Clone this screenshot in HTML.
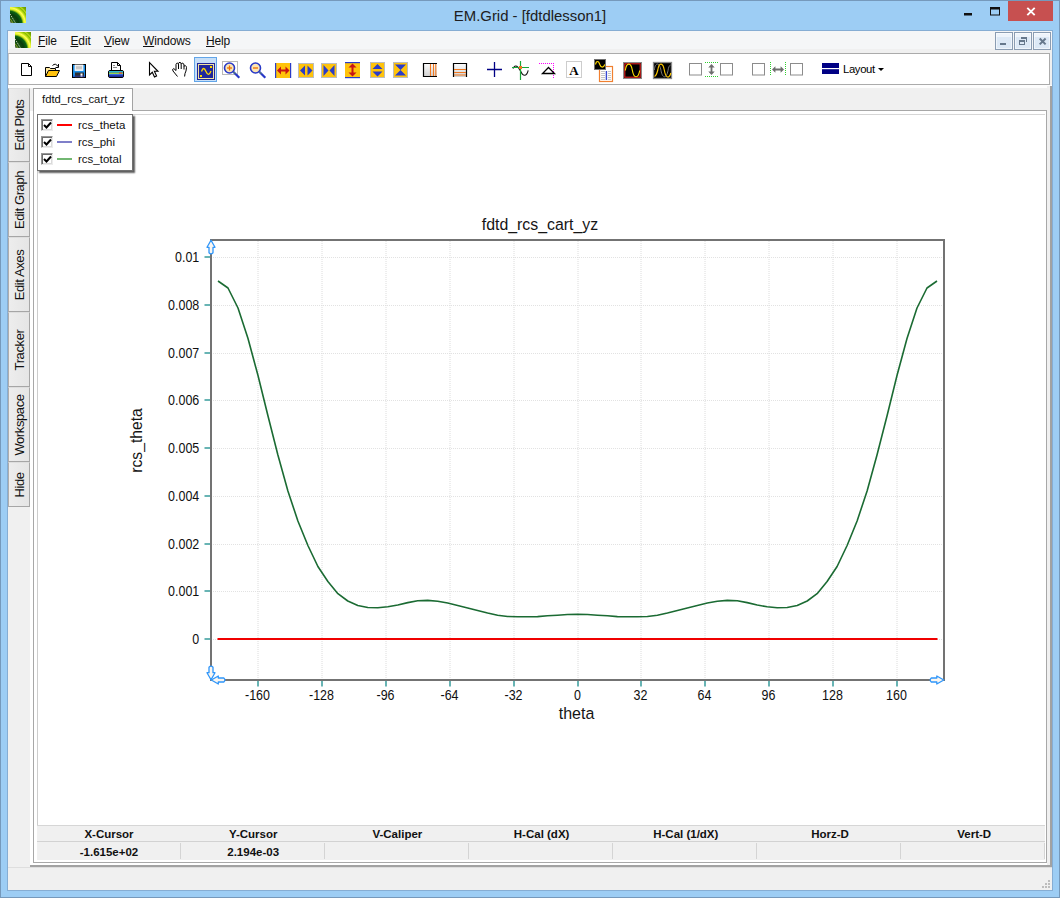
<!DOCTYPE html>
<html><head><meta charset="utf-8">
<style>
*{box-sizing:border-box;margin:0;padding:0}
html,body{width:1060px;height:898px;overflow:hidden}
body{position:relative;background:#9dcdf4;font-family:"Liberation Sans",sans-serif;font-size:12px;color:#000}
.abs{position:absolute}
#frame{left:0;top:0;width:1060px;height:898px;border:1px solid #7699bb}
#title{left:0;top:6px;width:1060px;text-align:center;font-size:14.9px;color:#202020;line-height:20px}
#client{left:7px;top:30px;width:1046px;height:861px;background:#f0f0f0;border:1px solid #86add3}
#menubar{left:8px;top:31px;width:1044px;height:18px;background:#f5f6f7}
#menubar span{position:absolute;top:3px;font-size:12px;letter-spacing:-0.15px;line-height:15px;color:#111}
#toolbar{left:8px;top:53px;width:1042px;height:32px;background:#fff;border:1px solid #ababab;border-left-color:#c8c8c8}
.stab{left:8px;width:22px;background:linear-gradient(to right,#ededed,#e5e5e5);border-top:1px solid #dedede;border-left:1px solid #adadad;border-right:1px solid #a6a6a6;border-bottom:1px solid #a6a6a6}
.stab span{position:absolute;left:10px;top:50%;white-space:nowrap;font-size:13px;letter-spacing:-0.4px;color:#111;transform:translate(-50%,-50%) rotate(-90deg)}
#dtab{left:33px;top:88px;width:100px;height:23px;background:#fff;border:1px solid #a3a3a3;border-bottom:none;font-size:11.3px;line-height:21px;padding-left:8px;color:#111}
#legend{left:37px;top:114px;width:96px;height:57px;background:#fff;border:1px solid #707070;box-shadow:2px 2px 1.5px rgba(0,0,0,.62)}
.lg{position:absolute;left:40px;font-size:11.5px;line-height:13px;color:#111}
.cb{position:absolute;left:3px;width:12px;height:12px;border:1px solid #969696;border-right-color:#ececec;border-bottom-color:#ececec;background:#fff;box-shadow:inset 1px 1px 0 #6c6c6c,inset -1px -1px 0 #dadada}
.cb svg{position:absolute;left:1px;top:0.5px}
.sw{position:absolute;left:19px;width:15px;height:2px}
.sh,.sv{position:absolute;width:143px;text-align:center;font-size:11.5px;font-weight:bold;color:#111;line-height:14px;letter-spacing:0px}
.sh{top:826.5px}.sv{top:844.5px}
.mdib{top:32px;width:18px;height:18px;background:linear-gradient(#eef4fb 0,#eef4fb 22%,#dde9f6 26%,#dce8f5 100%);border:1px solid #8a9cb2;box-shadow:inset 0 0 0 1px rgba(255,255,255,.55)}
.ico{position:absolute;overflow:visible}
</style></head><body>
<div id="frame" class="abs"></div>
<div id="title" class="abs">EM.Grid - [fdtdlesson1]</div>
<div class="abs" style="left:1008px;top:1px;width:45px;height:20px;background:#c75050"></div>
<svg class="abs" style="left:0;top:0" width="1060" height="30">
<path d="M1027.3,7.8 l7.4,7.4 M1034.7,7.8 l-7.4,7.4" stroke="#fff" stroke-width="1.9" fill="none"/>
<rect x="990.5" y="8" width="9" height="7" fill="none" stroke="#111" stroke-width="1"/><rect x="990" y="7" width="10" height="2.5" fill="#111"/>
<rect x="964" y="13" width="8" height="2.5" fill="#111"/>
</svg>
<div id="client" class="abs"></div>
<div id="menubar" class="abs"><span style="left:30px"><u>F</u>ile</span><span style="left:62.5px"><u>E</u>dit</span><span style="left:96px"><u>V</u>iew</span><span style="left:135px"><u>W</u>indows</span><span style="left:198px"><u>H</u>elp</span></div>
<div class="abs mdib" style="left:995px"></div><div class="abs mdib" style="left:1014px"></div><div class="abs mdib" style="left:1033px"></div>
<svg class="abs" style="left:0;top:0" width="1060" height="52" shape-rendering="crispEdges">
<rect x="1000" y="43" width="6" height="2" fill="#66788c"/>
<rect x="1021" y="37" width="6" height="2" fill="#66788c"/><rect x="1026" y="37" width="1" height="5" fill="#66788c"/>
<rect x="1019" y="40" width="6" height="2" fill="#66788c"/><rect x="1019" y="40" width="1" height="5" fill="#66788c"/><rect x="1024" y="40" width="1" height="5" fill="#66788c"/><rect x="1019" y="44" width="6" height="1" fill="#66788c"/>
<path d="M1039.7,38.500 l5.900,5.900 M1045.600,38.500 l-5.900,5.900" stroke="#66788c" stroke-width="2" fill="none" shape-rendering="auto"/>
</svg>
<div id="toolbar" class="abs"></div>
<svg class="abs" style="left:0;top:0" width="1060" height="90">
<path d="M21.5,63.5 H28.5 L31.5,66.5 V75.5 H21.5 Z" fill="#fff" stroke="#000" stroke-width="1"/><path d="M28.5,63.5 V66.5 H31.5" fill="none" stroke="#000" stroke-width="1"/>
<path d="M45.5,76.5 V67.5 H49.5 L50.5,68.5 H55.5 V70.5" fill="#ffe9a0" stroke="#000" stroke-width="1"/>
<path d="M45.5,76.5 L48.5,70.5 H59.5 L56.5,76.5 Z" fill="#ffc20e" stroke="#000" stroke-width="1"/>
<path d="M52.5,65.5 Q55.5,62.5 58,66.5" fill="none" stroke="#000" stroke-width="1"/><path d="M58.5,64 V67.5 H55.5" fill="none" stroke="#000" stroke-width="1"/>
<rect x="72.5" y="64.5" width="13" height="13" fill="#1c8ee6" stroke="#000" stroke-width="1"/>
<rect x="75" y="65" width="8" height="5.5" fill="#e4e4e4" stroke="#fff" stroke-width="0.8"/><rect x="76" y="66.3" width="6" height="2.6" fill="#c6c6c6"/>
<rect x="75" y="72.5" width="9" height="5" fill="#2e2e30"/><rect x="80.5" y="73.5" width="2" height="3.5" fill="#fff"/><rect x="73" y="75.5" width="12" height="1.6" fill="#2a3bb8" opacity="0.55"/>
<path d="M111.5,70 V62.5 H117.5 L120.5,65.5 V70" fill="#fff" stroke="#000" stroke-width="1"/><path d="M117.5,62.5 V65.5 H120.5" fill="none" stroke="#000" stroke-width="1"/><path d="M113,65.5h2M113,67.5h4" stroke="#888" stroke-width="1"/>
<rect x="108.5" y="70.5" width="15" height="7" rx="1.5" fill="#1a2a9a" stroke="#000" stroke-width="1"/>
<rect x="109" y="71" width="14" height="1.6" fill="#28b8d0"/><rect x="109" y="72.6" width="14" height="1.4" fill="#9ad048"/><rect x="119" y="72.4" width="3" height="1.2" fill="#e04040"/><rect x="109" y="74" width="14" height="1.5" fill="#3a6ae0"/><rect x="109" y="75.5" width="14" height="1.5" fill="#1a2a9a"/>
<path d="M149.5,62.5 V75 L152.3,72.3 L154.5,77 L156.6,76 L154.4,71.3 H158 Z" fill="#fff" stroke="#000" stroke-width="1.1" stroke-linejoin="miter"/>
<path d="M177.5,76.5 L173,71 Q171.8,69 173.8,68.6 L176,70.5 V64.5 Q176.2,63 177.6,63.2 Q178.4,63.4 178.5,64.8 V63.6 Q178.8,62.2 180,62.4 Q181.2,62.6 181.2,64 V64.2 Q181.6,63 182.8,63.2 Q184,63.6 184,65 V66.3 Q184.6,65.4 185.6,65.8 Q186.6,66.2 186.5,67.6 Q186.2,71.5 185,73.5 L184.6,76.5" fill="#fff" stroke="#000" stroke-width="1" stroke-linejoin="round"/>
<path d="M178.5,64.8 V69 M181.2,64.2 V69 M184,66 V69.5" stroke="#000" stroke-width="1" fill="none"/>
<rect x="194.5" y="57.5" width="22" height="24" fill="#c7dff7" stroke="#62a5e8" stroke-width="1"/>
<rect x="197" y="63" width="18" height="17" fill="#1f279c"/><rect x="198.5" y="64.5" width="15" height="14" fill="none" stroke="#f3e3a0" stroke-width="1"/>
<rect x="210" y="66" width="2" height="2" fill="#ffd800"/><rect x="200" y="75" width="2" height="2" fill="#ffd800"/>
<path d="M201.5,71.5 Q203.5,65.5 206,71.5 Q208.5,77.5 211,71" fill="none" stroke="#ffd800" stroke-width="1.3"/>
<rect x="222.5" y="61.5" width="15" height="13" fill="none" stroke="#b9b9b9" stroke-width="1"/><path d="M233.3,71.8 l6,6" stroke="#2838c8" stroke-width="2.2" fill="none"/><path d="M233.1,71.6 l2,2" stroke="#7ac030" stroke-width="1" fill="none"/><circle cx="229.5" cy="68.0" r="5" fill="#fbe6b4" stroke="#2838c8" stroke-width="1.6"/><path d="M227.0,68.0 h5" stroke="#f07000" stroke-width="1.3"/><path d="M229.5,65.5 v5" stroke="#f07000" stroke-width="1.3"/>
<path d="M259.3,71.8 l6,6" stroke="#2838c8" stroke-width="2.2" fill="none"/><path d="M259.1,71.6 l2,2" stroke="#7ac030" stroke-width="1" fill="none"/><circle cx="255.5" cy="68.0" r="5" fill="#fbe6b4" stroke="#2838c8" stroke-width="1.6"/><path d="M253.0,68.0 h5" stroke="#f07000" stroke-width="1.3"/>
<rect x="275" y="63" width="16" height="15" fill="#ffc30b"/><rect x="275" y="63" width="1.2" height="15" fill="#2a3cc8"/><rect x="290" y="63" width="1.2" height="15" fill="#2a3cc8"/>
<path d="M277,70.5 l4,-4 v3 h4.5 v-3 l4,4 l-4,4 v-3 h-4.5 v3 z" fill="#c81414"/>
<rect x="298.5" y="63.5" width="15" height="14" fill="#ffc30b" stroke="#bdbdbd" stroke-width="1"/>
<path d="M300,70.5 l5,-5 v10 z M312.5,70.5 l-5,-5 v10 z" fill="#2a3cc8"/>
<rect x="321.5" y="63.5" width="15" height="14" fill="#ffc30b" stroke="#bdbdbd" stroke-width="1"/>
<path d="M323.5,65 l5,5.5 l-5,5.5 z M334.5,65 l-5,5.5 l5,5.5 z" fill="#2a3cc8"/>
<rect x="345" y="62" width="15" height="16" fill="#ffc30b"/><rect x="345" y="62" width="15" height="1.2" fill="#2a3cc8"/><rect x="345" y="77" width="15" height="1.2" fill="#2a3cc8"/>
<path d="M352.5,63.5 l4,4 h-3 v5 h3 l-4,4 l-4,-4 h3 v-5 h-3 z" fill="#c81414"/>
<rect x="370.5" y="62.5" width="14" height="15" fill="#ffc30b" stroke="#bdbdbd" stroke-width="1"/>
<path d="M377.5,64 l5,5 h-10 z M377.5,76.5 l5,-5 h-10 z" fill="#2a3cc8"/>
<rect x="393.5" y="62.5" width="14" height="15" fill="#ffc30b" stroke="#bdbdbd" stroke-width="1"/>
<path d="M395,64.5 h11 l-5.5,5.5 z M395,75.5 h11 l-5.5,-5.5 z" fill="#2a3cc8"/>
<defs><linearGradient id="gg" x1="0" y1="0" x2="0" y2="1"><stop offset="0" stop-color="#fff"/><stop offset="1" stop-color="#cfcfcf"/></linearGradient></defs>
<rect x="423" y="63" width="14" height="14" fill="url(#gg)"/><path d="M437,63.5 H423.5 V76.5 H437" fill="none" stroke="#000" stroke-width="1.2"/>
<path d="M430.5,64 v12 M433.5,64 v12 M435.8,64 v12" stroke="#f07820" stroke-width="1.1"/>
<rect x="453" y="63" width="14" height="14" fill="url(#gg)"/><path d="M453.5,77 V63.5 H466.5 V77" fill="none" stroke="#000" stroke-width="1.2"/>
<path d="M454,69.5 h12 M454,72.5 h12 M454,75 h12" stroke="#f07820" stroke-width="1.1"/>
<path d="M487,69.5 h15 M494.5,62 v15" stroke="#000084" stroke-width="1.3"/>
<path d="M513,68.5 q1.8,-3.5 3.8,-2.2 q1.8,1.2 3.6,4.4 q2,4.6 4.2,4.6 q2.4,-0.2 3.6,-5" fill="none" stroke="#111" stroke-width="1.1"/>
<path d="M512,67.5 h17 M520.5,61 v19" stroke="#18a838" stroke-width="1.2"/><rect x="519" y="66" width="3" height="3" fill="#f07820"/>
<path d="M539,63.5 h15 M553.5,63 v15" stroke="#ff00ff" stroke-width="1" stroke-dasharray="1,1"/>
<path d="M548.5,67.5 L554.5,73.5 H542.5 Z" fill="#fff" stroke="#000" stroke-width="1.3" stroke-linejoin="miter"/>
<rect x="566.5" y="61.5" width="15" height="16" fill="#fff" stroke="#9a9a9a" stroke-width="1" stroke-dasharray="1,1"/>
<text x="574" y="74.5" font-family="Liberation Serif, serif" font-weight="bold" font-size="13" text-anchor="middle" fill="#000">A</text>
<rect x="599.5" y="66.5" width="13" height="15" fill="#fff" stroke="#f08030" stroke-width="1.2"/><path d="M601,71.5h4M608,71.5h3M601,73.5h4M608,73.5h3M601,75.500h4M608,75.500h3M601,77.5h4M608,77.5h3M601,79.4h4M608,79.4h3" stroke="#c4c4c4" stroke-width="1"/><path d="M606.4,71 v9" stroke="#3848d0" stroke-width="1.4"/>
<rect x="594.5" y="59.500" width="11" height="10" fill="#000" stroke="#707070" stroke-width="1"/><path d="M595.5,64.5 C596.3,60.5 598.6,60.5 599.8,64.5 C601,68 603.5,68 604.8,64.5" fill="none" stroke="#ffd800" stroke-width="1.2"/>
<rect x="623.5" y="62.5" width="18" height="16" fill="#000" stroke="#8a8a8a" stroke-width="1"/><rect x="624.8" y="63.8" width="15.4" height="13.4" fill="none" stroke="#e02020" stroke-width="1.1"/>
<path d="M625.3,70.5 C626.5,62 631,62 632.4,70.5 C633.8,78.8 638.3,78.8 639.7,70.5" fill="none" stroke="#ffe000" stroke-width="1.15"/>
<rect x="653.5" y="62.5" width="18" height="16" fill="#000" stroke="#8a8a8a" stroke-width="1.3"/>
<path d="M654.3,70 C655.3,62 659.5,62 661,70.5 C662.4,78.8 666.5,78.8 668,70.5 C668.5,67 669.5,65.3 670.5,65" fill="none" stroke="#7a7a7a" stroke-width="1"/>
<path d="M654.5,76.5 C656.5,75.5 657.3,72 657.8,70 C659,62 663,62 664.4,70.5 C665.8,78.8 669.5,78.8 670.8,73" fill="none" stroke="#ffc800" stroke-width="1.15"/>
<rect x="689.5" y="63.500" width="12" height="11.5" fill="#fff" stroke="#8c8c8c" stroke-width="1"/>
<rect x="720.5" y="63.500" width="12" height="11.5" fill="#fff" stroke="#8c8c8c" stroke-width="1"/>
<rect x="752.5" y="63.500" width="12" height="11.5" fill="#fff" stroke="#8c8c8c" stroke-width="1"/>
<rect x="790.5" y="63.500" width="12" height="11.5" fill="#fff" stroke="#8c8c8c" stroke-width="1"/>
<path d="M705,62.5 h13 M705,76.5 h13" stroke="#30d030" stroke-width="1" stroke-dasharray="1,1"/>
<path d="M711.5,64 l3.2,3.4 h-2.3 v4.2 h2.3 l-3.2,3.4 l-3.2,-3.4 h2.3 v-4.2 h-2.3 z" fill="#6e6e6e"/>
<path d="M770.5,62 v14 M785.5,62 v14" stroke="#30d030" stroke-width="1" stroke-dasharray="1,1"/>
<path d="M772,69.5 l3.4,-3.2 v2.3 h5.2 v-2.3 l3.4,3.2 l-3.4,3.2 v-2.3 h-5.2 v2.3 z" fill="#6e6e6e"/>
<rect x="822" y="63" width="17" height="11" fill="#000084"/><rect x="822" y="68" width="17" height="1.2" fill="#fff"/>
<text x="843" y="73" font-family="Liberation Sans, sans-serif" font-size="11.3" fill="#000" letter-spacing="-0.35">Layout</text>
<path d="M878,68 h6 l-3,3 z" fill="#000"/>
</svg><svg class="abs" style="left:10px;top:7px" width="16" height="16" viewBox="0 0 16 16"><defs><radialGradient id="ag1" gradientUnits="userSpaceOnUse" cx="-1" cy="17" r="23"><stop offset="0" stop-color="#4a7a18"/><stop offset="0.2" stop-color="#1c5a14"/><stop offset="0.42" stop-color="#083c0c"/><stop offset="0.56" stop-color="#0c6414"/><stop offset="0.64" stop-color="#d8ec20"/><stop offset="0.71" stop-color="#ffff58"/><stop offset="0.78" stop-color="#b8dc10"/><stop offset="0.84" stop-color="#84b800"/><stop offset="0.88" stop-color="#c4e020"/><stop offset="0.93" stop-color="#7cb000"/><stop offset="1" stop-color="#6c9c00"/></radialGradient></defs><rect width="16" height="16" fill="url(#ag1)"/><path d="M0,7 L5.5,16" stroke="#e8e8d0" stroke-width="0.9" stroke-dasharray="1.2,1"/><path d="M0,11.5 L3,16" stroke="#8a9a30" stroke-width="1"/><path d="M0,14.5 L1.2,16" stroke="#b0a0b0" stroke-width="1"/></svg><svg class="abs" style="left:15px;top:32px" width="16" height="16" viewBox="0 0 16 16"><defs><radialGradient id="ag2" gradientUnits="userSpaceOnUse" cx="-1" cy="17" r="23"><stop offset="0" stop-color="#4a7a18"/><stop offset="0.2" stop-color="#1c5a14"/><stop offset="0.42" stop-color="#083c0c"/><stop offset="0.56" stop-color="#0c6414"/><stop offset="0.64" stop-color="#d8ec20"/><stop offset="0.71" stop-color="#ffff58"/><stop offset="0.78" stop-color="#b8dc10"/><stop offset="0.84" stop-color="#84b800"/><stop offset="0.88" stop-color="#c4e020"/><stop offset="0.93" stop-color="#7cb000"/><stop offset="1" stop-color="#6c9c00"/></radialGradient></defs><rect width="16" height="16" fill="url(#ag2)"/><path d="M0,7 L5.5,16" stroke="#e8e8d0" stroke-width="0.9" stroke-dasharray="1.2,1"/><path d="M0,11.5 L3,16" stroke="#8a9a30" stroke-width="1"/><path d="M0,14.5 L1.2,16" stroke="#b0a0b0" stroke-width="1"/></svg>
<!-- mdi child frame -->
<div class="abs" style="left:30px;top:86px;width:1022px;height:781px;background:#fff"></div>
<div class="abs" style="left:8px;top:85px;width:1044px;height:3px;background:#fdfdfd"></div>
<div class="abs" style="left:30px;top:88px;width:1022px;height:23px;background:#f0f0f0"></div>
<div class="abs" style="left:1047px;top:86px;width:3px;height:779px;background:#f0f0f0"></div>
<div class="abs" style="left:1050px;top:86px;width:2px;height:781px;background:#a2a2a2"></div>
<div class="abs" style="left:30px;top:865px;width:1022px;height:2px;background:#a2a2a2"></div>
<div class="abs" style="left:8px;top:867px;width:1044px;height:1px;background:#dedede"></div>
<div class="abs" style="left:33px;top:110px;width:1014px;height:753px;border:1px solid #a8a8a8;background:#fff"></div>
<div class="abs" style="left:37px;top:114px;width:1008px;height:711px;border-left:1px solid #cdcdcd;border-top:1px solid #d6d6d6"></div>
<div class="abs" style="left:8px;top:88px;width:22px;height:419px;background:#fff"></div>
<div class="abs stab" style="top:88px;height:74px"><span>Edit Plots</span></div>
<div class="abs stab" style="top:162px;height:75px"><span>Edit Graph</span></div>
<div class="abs stab" style="top:237px;height:75px"><span>Edit Axes</span></div>
<div class="abs stab" style="top:312px;height:75px"><span>Tracker</span></div>
<div class="abs stab" style="top:387px;height:75px"><span>Workspace</span></div>
<div class="abs stab" style="top:462px;height:45px"><span>Hide</span></div>
<div id="dtab" class="abs">fdtd_rcs_cart_yz</div>
<div id="legend" class="abs">
 <div class="cb" style="top:4px"><svg width="9" height="9" viewBox="0 0 9 9"><path d="M1,4 L3.5,6.5 L8,1.5" fill="none" stroke="#000" stroke-width="2"/></svg></div><div class="sw" style="top:9px;background:#f00"></div><div class="lg" style="top:4px">rcs_theta</div>
 <div class="cb" style="top:21px"><svg width="9" height="9" viewBox="0 0 9 9"><path d="M1,4 L3.5,6.5 L8,1.5" fill="none" stroke="#000" stroke-width="2"/></svg></div><div class="sw" style="top:26px;background:#7f7fc9"></div><div class="lg" style="top:21px">rcs_phi</div>
 <div class="cb" style="top:38px"><svg width="9" height="9" viewBox="0 0 9 9"><path d="M1,4 L3.5,6.5 L8,1.5" fill="none" stroke="#000" stroke-width="2"/></svg></div><div class="sw" style="top:43px;background:#72b772"></div><div class="lg" style="top:38px">rcs_total</div>
</div>
<svg class="abs" style="left:0;top:0" width="1060" height="898" font-family="Liberation Sans, sans-serif">
<line x1="213" y1="257.5" x2="943" y2="257.5" stroke="#e2e2e2" stroke-width="1" stroke-dasharray="1,1" shape-rendering="crispEdges"/>
<line x1="213" y1="305.5" x2="943" y2="305.5" stroke="#e2e2e2" stroke-width="1" stroke-dasharray="1,1" shape-rendering="crispEdges"/>
<line x1="213" y1="353.5" x2="943" y2="353.5" stroke="#e2e2e2" stroke-width="1" stroke-dasharray="1,1" shape-rendering="crispEdges"/>
<line x1="213" y1="400.5" x2="943" y2="400.5" stroke="#e2e2e2" stroke-width="1" stroke-dasharray="1,1" shape-rendering="crispEdges"/>
<line x1="213" y1="448.5" x2="943" y2="448.5" stroke="#e2e2e2" stroke-width="1" stroke-dasharray="1,1" shape-rendering="crispEdges"/>
<line x1="213" y1="496.5" x2="943" y2="496.5" stroke="#e2e2e2" stroke-width="1" stroke-dasharray="1,1" shape-rendering="crispEdges"/>
<line x1="213" y1="544.5" x2="943" y2="544.5" stroke="#e2e2e2" stroke-width="1" stroke-dasharray="1,1" shape-rendering="crispEdges"/>
<line x1="213" y1="591.5" x2="943" y2="591.5" stroke="#e2e2e2" stroke-width="1" stroke-dasharray="1,1" shape-rendering="crispEdges"/>
<line x1="213" y1="639.5" x2="943" y2="639.5" stroke="#e2e2e2" stroke-width="1" stroke-dasharray="1,1" shape-rendering="crispEdges"/>
<line x1="258" y1="241" x2="258" y2="679" stroke="#dcdcdc" stroke-width="1" stroke-dasharray="1,1"/>
<line x1="322" y1="241" x2="322" y2="679" stroke="#dcdcdc" stroke-width="1" stroke-dasharray="1,1"/>
<line x1="386" y1="241" x2="386" y2="679" stroke="#dcdcdc" stroke-width="1" stroke-dasharray="1,1"/>
<line x1="450" y1="241" x2="450" y2="679" stroke="#dcdcdc" stroke-width="1" stroke-dasharray="1,1"/>
<line x1="514" y1="241" x2="514" y2="679" stroke="#dcdcdc" stroke-width="1" stroke-dasharray="1,1"/>
<line x1="578" y1="241" x2="578" y2="679" stroke="#dcdcdc" stroke-width="1" stroke-dasharray="1,1"/>
<line x1="641" y1="241" x2="641" y2="679" stroke="#dcdcdc" stroke-width="1" stroke-dasharray="1,1"/>
<line x1="705" y1="241" x2="705" y2="679" stroke="#dcdcdc" stroke-width="1" stroke-dasharray="1,1"/>
<line x1="769" y1="241" x2="769" y2="679" stroke="#dcdcdc" stroke-width="1" stroke-dasharray="1,1"/>
<line x1="833" y1="241" x2="833" y2="679" stroke="#dcdcdc" stroke-width="1" stroke-dasharray="1,1"/>
<line x1="897" y1="241" x2="897" y2="679" stroke="#dcdcdc" stroke-width="1" stroke-dasharray="1,1"/>
<rect x="211" y="240" width="733" height="440" fill="none" stroke="#737373" stroke-width="2" shape-rendering="crispEdges"/>
<rect x="204.5" y="256" width="5.5" height="2" fill="#68b4b4"/>
<rect x="204.5" y="304" width="5.5" height="2" fill="#68b4b4"/>
<rect x="204.5" y="352" width="5.5" height="2" fill="#68b4b4"/>
<rect x="204.5" y="399" width="5.5" height="2" fill="#68b4b4"/>
<rect x="204.5" y="447" width="5.5" height="2" fill="#68b4b4"/>
<rect x="204.5" y="495" width="5.5" height="2" fill="#68b4b4"/>
<rect x="204.5" y="543" width="5.5" height="2" fill="#68b4b4"/>
<rect x="204.5" y="590" width="5.5" height="2" fill="#68b4b4"/>
<rect x="204.5" y="638" width="5.5" height="2" fill="#68b4b4"/>
<rect x="257" y="681" width="2" height="5.5" fill="#68b4b4"/>
<rect x="321" y="681" width="2" height="5.5" fill="#68b4b4"/>
<rect x="385" y="681" width="2" height="5.5" fill="#68b4b4"/>
<rect x="449" y="681" width="2" height="5.5" fill="#68b4b4"/>
<rect x="513" y="681" width="2" height="5.5" fill="#68b4b4"/>
<rect x="577" y="681" width="2" height="5.5" fill="#68b4b4"/>
<rect x="640" y="681" width="2" height="5.5" fill="#68b4b4"/>
<rect x="704" y="681" width="2" height="5.5" fill="#68b4b4"/>
<rect x="768" y="681" width="2" height="5.5" fill="#68b4b4"/>
<rect x="832" y="681" width="2" height="5.5" fill="#68b4b4"/>
<rect x="896" y="681" width="2" height="5.5" fill="#68b4b4"/>
<text transform="translate(199.3,262.1) scale(0.89,1)" font-size="14" text-anchor="end" fill="#101010">0.01</text>
<text transform="translate(199.3,310.1) scale(0.89,1)" font-size="14" text-anchor="end" fill="#101010">0.008</text>
<text transform="translate(199.3,358.1) scale(0.89,1)" font-size="14" text-anchor="end" fill="#101010">0.007</text>
<text transform="translate(199.3,405.1) scale(0.89,1)" font-size="14" text-anchor="end" fill="#101010">0.006</text>
<text transform="translate(199.3,453.1) scale(0.89,1)" font-size="14" text-anchor="end" fill="#101010">0.005</text>
<text transform="translate(199.3,501.1) scale(0.89,1)" font-size="14" text-anchor="end" fill="#101010">0.004</text>
<text transform="translate(199.3,549.1) scale(0.89,1)" font-size="14" text-anchor="end" fill="#101010">0.002</text>
<text transform="translate(199.3,596.1) scale(0.89,1)" font-size="14" text-anchor="end" fill="#101010">0.001</text>
<text transform="translate(199.3,644.1) scale(0.89,1)" font-size="14" text-anchor="end" fill="#101010">0</text>
<text transform="translate(257.5,700.1) scale(0.89,1)" font-size="14" text-anchor="middle" fill="#101010">-160</text>
<text transform="translate(321.5,700.1) scale(0.89,1)" font-size="14" text-anchor="middle" fill="#101010">-128</text>
<text transform="translate(385.5,700.1) scale(0.89,1)" font-size="14" text-anchor="middle" fill="#101010">-96</text>
<text transform="translate(449.5,700.1) scale(0.89,1)" font-size="14" text-anchor="middle" fill="#101010">-64</text>
<text transform="translate(513.5,700.1) scale(0.89,1)" font-size="14" text-anchor="middle" fill="#101010">-32</text>
<text transform="translate(577.5,700.1) scale(0.89,1)" font-size="14" text-anchor="middle" fill="#101010">0</text>
<text transform="translate(640.5,700.1) scale(0.89,1)" font-size="14" text-anchor="middle" fill="#101010">32</text>
<text transform="translate(704.5,700.1) scale(0.89,1)" font-size="14" text-anchor="middle" fill="#101010">64</text>
<text transform="translate(768.5,700.1) scale(0.89,1)" font-size="14" text-anchor="middle" fill="#101010">96</text>
<text transform="translate(832.5,700.1) scale(0.89,1)" font-size="14" text-anchor="middle" fill="#101010">128</text>
<text transform="translate(896.5,700.1) scale(0.89,1)" font-size="14" text-anchor="middle" fill="#101010">160</text>
<polyline points="218.0,281.0 228.0,288.0 238.0,308.0 248.0,338.5 258.0,375.5 268.0,416.0 277.9,455.0 287.9,491.0 297.9,521.0 307.9,545.5 317.9,566.5 327.9,581.5 337.9,593.7 347.8,601.0 357.8,605.5 367.8,607.5 377.8,607.7 387.8,606.8 397.8,605.0 407.8,602.6 417.7,600.7 427.7,600.4 437.7,601.3 447.7,603.0 457.7,605.5 467.7,608.0 477.6,610.5 487.6,613.0 497.6,615.2 507.6,616.5 517.6,616.8 527.6,616.8 537.6,616.6 547.5,615.8 557.5,615.2 567.5,614.5 577.5,614.3 587.5,614.5 597.5,615.2 607.5,615.8 617.4,616.6 627.4,616.8 637.4,616.8 647.4,616.5 657.4,615.2 667.4,613.0 677.4,610.5 687.3,608.0 697.3,605.5 707.3,603.0 717.3,601.3 727.3,600.4 737.3,600.7 747.2,602.6 757.2,605.0 767.2,606.8 777.2,607.7 787.2,607.5 797.2,605.5 807.2,601.0 817.1,593.7 827.1,581.5 837.1,566.5 847.1,545.5 857.1,521.0 867.1,491.0 877.0,455.0 887.0,416.0 897.0,375.5 907.0,338.5 917.0,308.0 927.0,288.0 937.0,281.0" fill="none" stroke="#1b6b33" stroke-width="1.6" stroke-linejoin="round"/>
<line x1="217.5" y1="639" x2="937.5" y2="639" stroke="#f00000" stroke-width="2"/>
<text transform="translate(540,229.5) scale(0.935,1)" font-size="17" text-anchor="middle" fill="#151515">fdtd_rcs_cart_yz</text>
<text transform="translate(576.5,719) scale(0.97,1)" font-size="16.5" text-anchor="middle" fill="#151515">theta</text>
<text transform="translate(142,440.5) rotate(-90) scale(0.95,1)" font-size="16.5" text-anchor="middle" fill="#151515">rcs_theta</text>
<path d="M211,240.3 l4,7 h-2 v5.500 q-2,2.200 -4,0 v-5.500 h-2 z" fill="#fbf6f0" stroke="#2f96fa" stroke-width="1.3" stroke-linejoin="round"/>
<path d="M211,679.7 l4,-7 h-2 v-5.500 q-2,-2.200 -4,0 v5.500 h-2 z" fill="#fbf6f0" stroke="#2f96fa" stroke-width="1.3" stroke-linejoin="round"/>
<path d="M211.3,680 l7,-4 v2 h5.500 q2.200,2 0,4 h-5.500 v2 z" fill="#fbf6f0" stroke="#2f96fa" stroke-width="1.3" stroke-linejoin="round"/>
<path d="M943.8,680 l-7,-4 v2 h-5.500 q-2.200,2 0,4 h5.500 v2 z" fill="#fbf6f0" stroke="#2f96fa" stroke-width="1.3" stroke-linejoin="round"/>
</svg>
<div class="abs" style="left:37px;top:825px;width:1008px;height:35px;background:#f0f0f0;border-top:1px solid #d6d6d6"></div>
<div class="abs" style="left:37px;top:841px;width:1008px;height:1px;background:#d2d2d2"></div>
<div class="sh" style="left:37.5px">X-Cursor</div>
<div class="sv" style="left:37.5px">-1.615e+02</div>
<div class="abs" style="left:180px;top:843px;width:1px;height:16px;background:#d4d4d4"></div>
<div class="sh" style="left:181.7px">Y-Cursor</div>
<div class="sv" style="left:181.7px">2.194e-03</div>
<div class="abs" style="left:324px;top:843px;width:1px;height:16px;background:#d4d4d4"></div>
<div class="sh" style="left:325.9px">V-Caliper</div>
<div class="sv" style="left:325.9px"></div>
<div class="abs" style="left:468px;top:843px;width:1px;height:16px;background:#d4d4d4"></div>
<div class="sh" style="left:470.1px">H-Cal (dX)</div>
<div class="sv" style="left:470.1px"></div>
<div class="abs" style="left:612px;top:843px;width:1px;height:16px;background:#d4d4d4"></div>
<div class="sh" style="left:614.3px">H-Cal (1/dX)</div>
<div class="sv" style="left:614.3px"></div>
<div class="abs" style="left:756px;top:843px;width:1px;height:16px;background:#d4d4d4"></div>
<div class="sh" style="left:758.5px">Horz-D</div>
<div class="sv" style="left:758.5px"></div>
<div class="abs" style="left:900px;top:843px;width:1px;height:16px;background:#d4d4d4"></div>
<div class="sh" style="left:902.7px">Vert-D</div>
<div class="sv" style="left:902.7px"></div>
<div class="abs" style="left:1044px;top:843px;width:1px;height:16px;background:#d4d4d4"></div>
<svg class="abs" style="left:1040px;top:878px" width="12" height="12"><rect x="8" y="2" width="2" height="2" fill="#bdbdbd"/><rect x="5" y="5" width="2" height="2" fill="#bdbdbd"/><rect x="8" y="5" width="2" height="2" fill="#bdbdbd"/><rect x="2" y="8" width="2" height="2" fill="#bdbdbd"/><rect x="5" y="8" width="2" height="2" fill="#bdbdbd"/><rect x="8" y="8" width="2" height="2" fill="#bdbdbd"/></svg>
</body></html>
